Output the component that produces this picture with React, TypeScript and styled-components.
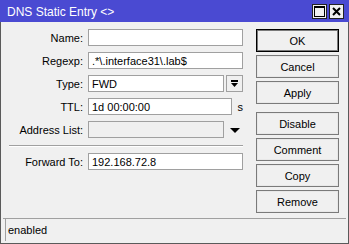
import React from "react";
import styled, { createGlobalStyle } from "styled-components";

const Global = createGlobalStyle`
  html, body { margin: 0; padding: 0; background: #f0f0f0; }
  body { font-family: "Liberation Sans", Arial, sans-serif; font-size: 11px; color: #000; }
  * { box-sizing: border-box; }
`;

const Window = styled.div`
  width: 349px;
  height: 244px;
  display: flex;
  flex-direction: column;
  background: #f0f0f0;
  border: 1px solid #5a5a5a;
  border-top: none;
`;

const TitleBar = styled.div`
  height: 22px;
  margin: 0 -1px;
  background: #4a4ad2;
  display: flex;
  align-items: center;
  padding: 2px 5px 0 7px;
  color: #fff;
  font-size: 12px;
`;

const TitleText = styled.div`
  flex: 1;
`;

const TitleButtons = styled.div`
  display: flex;
  gap: 2px;
  align-self: flex-start;
  margin-top: 2px;
`;

const TitleButton = styled.div`
  width: 15px;
  height: 15px;
  background: #f0f0f0;
  border: 1px solid #222;
  display: flex;
  align-items: center;
  justify-content: center;
`;

const Body = styled.div`
  flex: 1;
  display: flex;
  padding: 7px 9px 0 2px;
`;

const Form = styled.div`
  display: grid;
  grid-template-columns: 80px 155px;
  column-gap: 5px;
  row-gap: 6px;
  align-content: start;
`;

const Label = styled.div`
  height: 17px;
  display: flex;
  align-items: center;
  justify-content: flex-end;
`;

const Field = styled.div`
  height: 17px;
  display: flex;
  align-items: center;
  gap: 2px;
`;

const Input = styled.div<{ $w?: number; $disabled?: boolean }>`
  width: ${(p) => (p.$w ? `${p.$w}px` : "100%")};
  height: 17px;
  background: ${(p) => (p.$disabled ? "#f0f0f0" : "#fff")};
  border: 1px solid #a0a0a0;
  padding: 0 0 0 3px;
  display: flex;
  align-items: center;
  white-space: nowrap;
  overflow: hidden;
`;

const DropButton = styled.div`
  width: 17px;
  height: 17px;
  border: 1px solid #a0a0a0;
  background: #f0f0f0;
  display: flex;
  align-items: center;
  justify-content: center;
`;

const Suffix = styled.div`
  padding-left: 4px;
`;

const Separator = styled.div`
  grid-column: 1 / span 2;
  height: 3px;
  margin-left: 6px;
  display: flex;
  align-items: center;
  &::after {
    content: "";
    flex: 1;
    height: 1px;
    background: #a0a0a0;
    box-shadow: 0 1px 0 #fff;
  }
`;

const Buttons = styled.div`
  margin-left: auto;
  width: 83px;
  display: flex;
  flex-direction: column;
  gap: 3px;
`;

const Button = styled.div<{ $default?: boolean; $gapTop?: boolean }>`
  height: 23px;
  border: 1px solid ${(p) => (p.$default ? "#000" : "#7a7a7a")};
  box-shadow: inset 0 0 0 1px ${(p) => (p.$default ? "#7a7a7a" : "#e8e8e8")};
  background: #f0f0f0;
  display: flex;
  align-items: center;
  justify-content: center;
  margin-top: ${(p) => (p.$gapTop ? "5px" : "0")};
`;

const StatusBar = styled.div`
  height: 25px;
  padding: 0 5px 2px 2px;
  display: flex;
  border-top: 1px solid #a0a0a0;
  margin: 0 2px;
`;

const StatusField = styled.div`
  flex: 1;
  border-left: 1px solid #a0a0a0;
  display: flex;
  align-items: center;
  padding-left: 2px;
`;

const DropIcon = () => (
  <svg width="9" height="8" viewBox="0 0 9 8">
    <rect x="1" y="0" width="7" height="2" fill="#000" />
    <path d="M1 3 H8 L4.5 7 Z" fill="#000" />
  </svg>
);

const ArrowIcon = () => (
  <svg width="10" height="6" viewBox="0 0 10 6">
    <path d="M0 0 H10 L5 5 Z" fill="#000" />
  </svg>
);

const rows: { label: string; value: string }[] = [
  { label: "Name:", value: "" },
  { label: "Regexp:", value: ".*\\.interface31\\.lab$" },
];

export default function App() {
  return (
    <>
      <Global />
      <Window>
        <TitleBar>
          <TitleText>DNS Static Entry &lt;&gt;</TitleText>
          <TitleButtons>
            <TitleButton>
              <svg width="11" height="11" viewBox="0 0 11 11">
                <rect x="0.5" y="0.5" width="10" height="10" fill="none" stroke="#000" />
                <rect x="0" y="0" width="11" height="2" fill="#000" />
              </svg>
            </TitleButton>
            <TitleButton>
              <svg width="9" height="9" viewBox="0 0 9 9">
                <path d="M1 1 L8 8 M8 1 L1 8" stroke="#000" strokeWidth="2" />
              </svg>
            </TitleButton>
          </TitleButtons>
        </TitleBar>
        <Body>
          <Form>
            {rows.map((r) => (
              <React.Fragment key={r.label}>
                <Label>{r.label}</Label>
                <Field>
                  <Input>{r.value}</Input>
                </Field>
              </React.Fragment>
            ))}
            <Label>Type:</Label>
            <Field>
              <Input $w={136}>FWD</Input>
              <DropButton>
                <DropIcon />
              </DropButton>
            </Field>
            <Label>TTL:</Label>
            <Field>
              <Input $w={144}>1d 00:00:00</Input>
              <Suffix>s</Suffix>
            </Field>
            <Label>Address List:</Label>
            <Field>
              <Input $w={136} $disabled />
              <Suffix>
                <ArrowIcon />
              </Suffix>
            </Field>
            <Separator />
            <Label>Forward To:</Label>
            <Field>
              <Input>192.168.72.8</Input>
            </Field>
          </Form>
          <Buttons>
            <Button $default>OK</Button>
            <Button>Cancel</Button>
            <Button>Apply</Button>
            <Button $gapTop>Disable</Button>
            <Button>Comment</Button>
            <Button>Copy</Button>
            <Button>Remove</Button>
          </Buttons>
        </Body>
        <StatusBar>
          <StatusField>enabled</StatusField>
        </StatusBar>
      </Window>
    </>
  );
}
